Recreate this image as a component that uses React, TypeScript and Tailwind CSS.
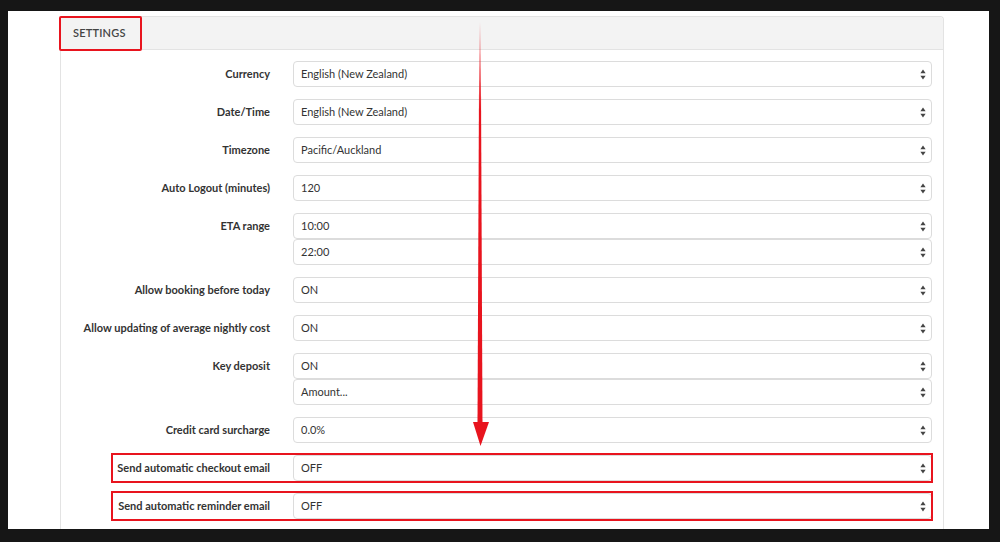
import React from 'react';

type Row = {
  label: string;
  values: string[];
  boxed?: boolean;
};

const rows: Row[] = [
  { label: 'Currency', values: ['English (New Zealand)'] },
  { label: 'Date/Time', values: ['English (New Zealand)'] },
  { label: 'Timezone', values: ['Pacific/Auckland'] },
  { label: 'Auto Logout (minutes)', values: ['120'] },
  { label: 'ETA range', values: ['10:00', '22:00'] },
  { label: 'Allow booking before today', values: ['ON'] },
  { label: 'Allow updating of average nightly cost', values: ['ON'] },
  { label: 'Key deposit', values: ['ON', 'Amount...'] },
  { label: 'Credit card surcharge', values: ['0.0%'] },
  { label: 'Send automatic checkout email', values: ['OFF'], boxed: true },
  { label: 'Send automatic reminder email', values: ['OFF'], boxed: true },
];

function Updown() {
  return (
    <svg width="6" height="11" viewBox="0 0 6 11" className="shrink-0">
      <path d="M3 0.5 L5.6 4.3 L0.4 4.3 Z" fill="#444" />
      <path d="M3 10.5 L5.6 6.7 L0.4 6.7 Z" fill="#444" />
    </svg>
  );
}

function FakeSelect({ value }: { value: string }) {
  return (
    <div className="flex h-[26px] items-center justify-between rounded-[4px] border border-[#dcdcdc] bg-white pl-[7px] pr-[5px] text-[11px] text-[#333]">
      <span>{value}</span>
      <Updown />
    </div>
  );
}

function SettingRow({ row }: { row: Row }) {
  return (
    <div className="relative flex items-start">
      {row.boxed && (
        <div className="pointer-events-none absolute -top-[2px] -bottom-[2px] left-[50px] -right-[1px] z-10 border-2 border-[#e8141e]" />
      )}
      <div className="w-[209px] shrink-0 text-right text-[11px] font-bold leading-[26px] text-[#333]">
        {row.label}
      </div>
      <div className="ml-[23px] flex flex-1 flex-col">
        {row.values.map((v, i) => (
          <FakeSelect key={i} value={v} />
        ))}
      </div>
    </div>
  );
}

export default function App() {
  return (
    <div
      className="relative h-[542px] w-[1000px] overflow-hidden bg-[#161616] pl-[8px] pr-[11px] pt-[11px]"
      style={{ fontFamily: 'Lato, "Open Sans", sans-serif' }}
    >
      <div className="h-[518px] overflow-hidden bg-white pl-[52px] pr-[45px] pt-[5px]">
        <div className="rounded-t-[4px] border border-b-0 border-[#e3e3e3]">
          {/* Header */}
          <div className="relative flex h-[33px] items-center rounded-t-[4px] border-b border-[#e3e3e3] bg-[#f3f3f3] pl-[12px]">
            <span className="text-[11px] font-semibold tracking-[0.2px] text-[#444]">SETTINGS</span>
            <div className="pointer-events-none absolute -left-[2px] -top-[1px] h-[35px] w-[83px] rounded-[2px] border-2 border-[#e8141e]" />
          </div>

          {/* Body */}
          <div className="flex flex-col gap-[12px] pb-[20px] pr-[11px] pt-[11px]">
            {rows.map((r) => (
              <SettingRow key={r.label} row={r} />
            ))}
          </div>
        </div>
      </div>

      {/* annotation arrow */}
      <svg
        className="pointer-events-none absolute left-[470px] top-[20px] z-20"
        width="20"
        height="428"
        viewBox="0 0 20 428"
      >
        <defs>
          <linearGradient id="shaft" x1="0" y1="0" x2="0" y2="1">
            <stop offset="0" stopColor="#e8141e" stopOpacity="0" />
            <stop offset="0.22" stopColor="#e8141e" stopOpacity="1" />
            <stop offset="1" stopColor="#e8141e" stopOpacity="1" />
          </linearGradient>
        </defs>
        <path d="M9.3 2 L10.7 2 L12.5 403 L7.5 403 Z" fill="url(#shaft)" />
        <path d="M3 402 L19 402 L10.5 426 Z" fill="#e8141e" />
      </svg>
    </div>
  );
}
